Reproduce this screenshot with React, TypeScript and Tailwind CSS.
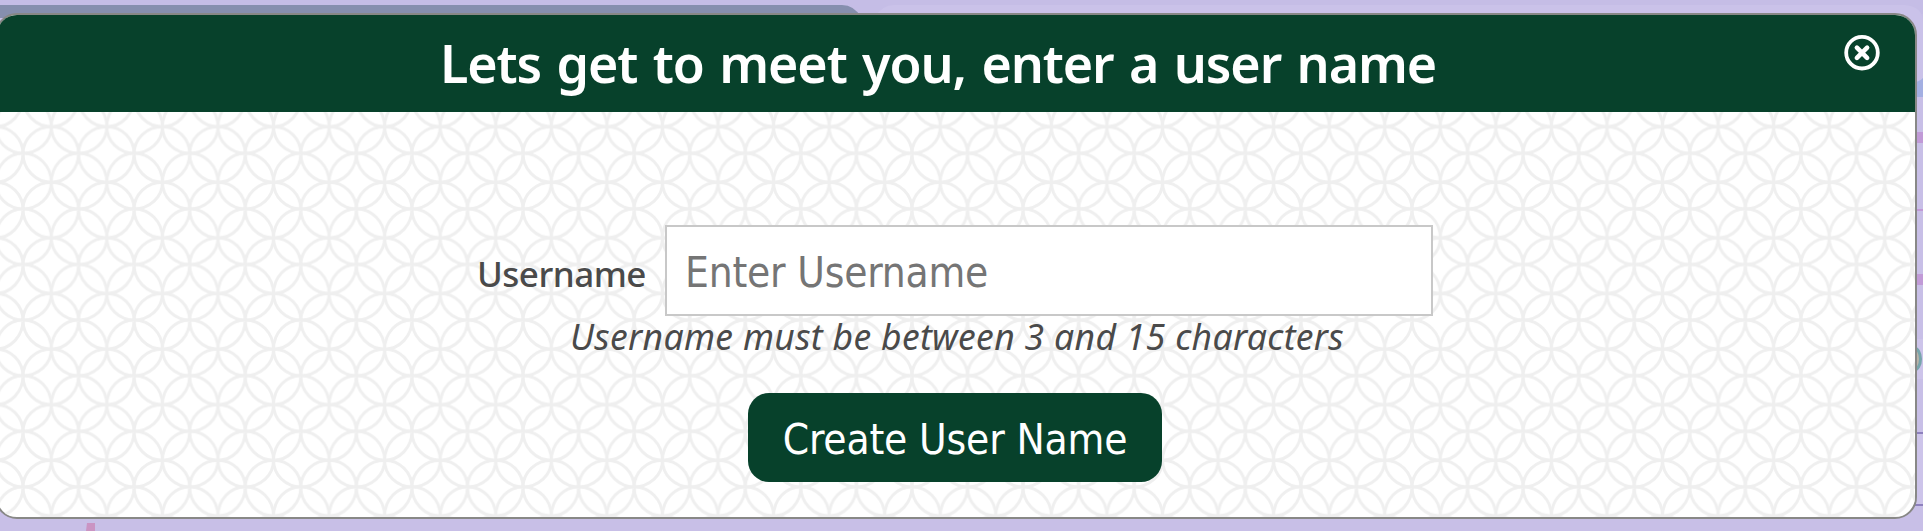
import React from "react";

function Backdrop() {
  return (
    <svg className="absolute inset-0 h-full w-full" viewBox="0 0 1923 531" aria-hidden="true">
      <rect width="1923" height="531" fill="#c8bfe7" />
      <rect width="1923" height="14" fill="#c5bde6" />
      <path d="M0 5H842Q854 5 862 18H0Z" fill="#868fae" />
      <path d="M874 18Q882 5 894 5H1905Q1923 7 1923 22V78Q1921 82 1910 84V18Z" fill="#cac2e9" />
      <path d="M1910 83Q1920 82 1923 78V97H1910Z" fill="#a3afe2" />
      <rect x="1910" y="132" width="13" height="11" fill="#c19ad7" />
      <rect x="1910" y="209" width="13" height="2" fill="#c19ad7" />
      <rect x="1910" y="274" width="13" height="11" fill="#c19ad7" />
      <rect x="1910" y="339" width="13" height="40" fill="#cdc4ea" />
      <ellipse cx="1914" cy="359" rx="6.5" ry="11" fill="#b9b3a8" stroke="#78a5ac" strokeWidth="3" />
      <rect x="1910" y="433" width="13" height="71" fill="#cdc4ea" />
      <rect x="1910" y="432" width="13" height="2" fill="#8d80bd" />
      <rect x="1910" y="504" width="13" height="2" fill="#8d80bd" />
      <path d="M87 523H95V531H86Z" fill="#ca94c3" />
    </svg>
  );
}

function CirclePattern() {
  return (
    <svg className="absolute inset-0 h-full w-full" aria-hidden="true">
      <defs>
        <pattern id="rings" x="26" y="-14.3" width="55.56" height="55.6" patternUnits="userSpaceOnUse">
          <g fill="none" stroke="#efefef" strokeWidth="3">
            <path d="M0 0A28.3 29 0 0 1 28.3 29A28.3 29 0 0 1 0 0" />
            <path d="M55.56 0A27.26 29 0 0 1 28.3 29A27.26 29 0 0 1 55.56 0" />
            <path d="M0 55.6A28.3 26.6 0 0 1 28.3 29A28.3 26.6 0 0 1 0 55.6" />
            <path d="M55.56 55.6A27.26 26.6 0 0 1 28.3 29A27.26 26.6 0 0 1 55.56 55.6" />
          </g>
        </pattern>
      </defs>
      <rect width="100%" height="100%" fill="url(#rings)" />
    </svg>
  );
}

export default function App() {
  return (
    <div className="relative h-[531px] w-[1923px] overflow-hidden bg-[#c8bfe7] font-['Noto_Sans',sans-serif]">
      <Backdrop />
      <div className="relative mt-[13px] -ml-[5px] flex h-[506px] w-[1922px] flex-col overflow-hidden rounded-[22px] border-2 border-[#888886] bg-white">
        <header className="relative flex h-[97px] shrink-0 items-center bg-[#07412b] pb-[2px] pl-[443px]">
          <h1 className="text-[52px] leading-none font-semibold tracking-[-1.1px] whitespace-nowrap text-white [word-spacing:3px]">
            Lets get to meet you, enter a user name
          </h1>
          <button className="absolute top-[20px] right-[35px] size-[36px]" aria-label="Close">
            <svg viewBox="0 0 36 36" className="size-full" fill="none" stroke="#fff">
              <circle cx="18" cy="17.7" r="15.8" strokeWidth="3.8" />
              <path d="M12.9 12.6L23.1 22.8M23.1 12.6L12.9 22.8" strokeWidth="4.6" strokeLinecap="round" />
            </svg>
          </button>
        </header>
        <main className="relative flex-1">
          <CirclePattern />
          <form className="relative flex flex-col pt-[113px] text-[#4a4a4a]" onSubmit={(e) => e.preventDefault()}>
            <div className="flex h-[91px] items-center pl-[480px]">
              <label htmlFor="username" className="w-[188px] pt-[6px] text-[35px] leading-none font-medium tracking-[-0.5px] whitespace-nowrap">
                Username
              </label>
              <input
                id="username"
                placeholder="Enter Username"
                className="h-[91px] w-[768px] border-2 border-[#c8c8c8] bg-white pt-[4px] pl-[18px] font-['DejaVu_Sans_Condensed','DejaVu_Sans',sans-serif] text-[42px] tracking-[-0.2px] outline-none placeholder:text-[#757575]"
              />
            </div>
            <p className="flex h-[44px] items-center pb-[3px] pl-[573px] text-[35.5px] leading-none tracking-[0.33px] whitespace-nowrap italic">
              Username must be between 3 and 15 characters
            </p>
            <button className="mt-[33px] ml-[751px] h-[89px] w-[414px] rounded-[21px] bg-[#07412b] pt-[5px] font-['DejaVu_Sans_Condensed','DejaVu_Sans',sans-serif] text-[42px] leading-none tracking-[-0.15px] whitespace-nowrap text-white">
              Create User Name
            </button>
          </form>
        </main>
      </div>
    </div>
  );
}
